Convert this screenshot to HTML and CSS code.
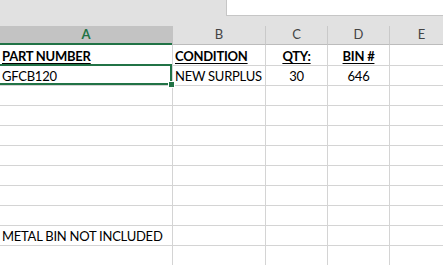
FILE: index.html
```html
<!DOCTYPE html>
<html>
<head>
<meta charset="utf-8">
<link rel="stylesheet" href="styles.css">
</head>
<body>
<div class="topbar"><div class="topbar-gap"></div><div class="formula"></div></div>
<div class="sheet">
  <div class="hd hd-sel">A</div><div class="hd">B</div><div class="hd">C</div><div class="hd">D</div><div class="hd">E</div>

  <div class="c"><span class="b">PART NUMBER</span></div><div class="c"><span class="b">CONDITION</span></div><div class="c ctr"><span class="b">QTY:</span></div><div class="c ctr"><span class="b">BIN #</span></div><div class="c"></div>

  <div class="c sel"><span>GFCB120</span><div class="sel-box"></div><div class="sel-handle"></div></div><div class="c"><span>NEW SURPLUS</span></div><div class="c ctr"><span>30</span></div><div class="c ctr"><span>646</span></div><div class="c"></div>

  <div class="c"></div><div class="c"></div><div class="c"></div><div class="c"></div><div class="c"></div>
  <div class="c"></div><div class="c"></div><div class="c"></div><div class="c"></div><div class="c"></div>
  <div class="c"></div><div class="c"></div><div class="c"></div><div class="c"></div><div class="c"></div>
  <div class="c"></div><div class="c"></div><div class="c"></div><div class="c"></div><div class="c"></div>
  <div class="c"></div><div class="c"></div><div class="c"></div><div class="c"></div><div class="c"></div>
  <div class="c"></div><div class="c"></div><div class="c"></div><div class="c"></div><div class="c"></div>
  <div class="c"></div><div class="c"></div><div class="c"></div><div class="c"></div><div class="c"></div>

  <div class="c"><span>METAL BIN NOT INCLUDED</span></div><div class="c"></div><div class="c"></div><div class="c"></div><div class="c"></div>
  <div class="c"></div><div class="c"></div><div class="c"></div><div class="c"></div><div class="c"></div>
</div>
</body>
</html>
```
FILE: styles.css
```css
html, body {
  margin: 0;
  padding: 0;
}
body {
  width: 443px;
  height: 265px;
  overflow: hidden;
  background: #ffffff;
  font-family: Lato, "Liberation Sans", sans-serif;
  font-size: 13px;
  color: #000;
}
.topbar {
  display: flex;
  height: 26px;
  background: #e1e1e1;
}
.topbar-gap {
  width: 226px;
  flex: none;
}
.formula {
  flex: 1;
  height: 16px;
  box-sizing: border-box;
  background: #ffffff;
  border-left: 1px solid #c6c6c6;
  border-bottom: 1px solid #c6c6c6;
}
.sheet {
  display: grid;
  grid-template-columns: 173px 93px 62px 62px 64px;
  grid-template-rows: 19px 21px repeat(10, 20px);
  width: 454px;
}
.hd {
  box-sizing: border-box;
  background: #e1e1e1;
  border-right: 1px solid #c9c9c9;
  border-bottom: 1px solid #bcbcbc;
  color: #444444;
  text-align: center;
  line-height: 16px;
}
.hd-sel {
  background: #c3c3c3;
  border-right-color: #c3c3c3;
  border-bottom: none;
  box-shadow: inset 0 -2px 0 #217346;
  color: #217346;
  font-weight: bold;
}
.c {
  box-sizing: border-box;
  border-right: 1px solid #d4d4d4;
  border-bottom: 1px solid #d4d4d4;
  display: flex;
  align-items: flex-end;
  padding: 0 2px 1px 2px;
  line-height: 16px;
  white-space: nowrap;
  letter-spacing: -0.25px;
}
.ctr {
  justify-content: center;
}
.b {
  font-weight: bold;
  text-decoration: underline;
  text-underline-offset: 2px;
}
.sel {
  position: relative;
}
.sel-box {
  position: absolute;
  top: -2px;
  left: -2px;
  right: 0;
  bottom: 0;
  border: 2px solid #217346;
}
.sel-handle {
  position: absolute;
  right: -3px;
  bottom: -3px;
  width: 5px;
  height: 5px;
  background: #217346;
  border: 1px solid #ffffff;
}
```
